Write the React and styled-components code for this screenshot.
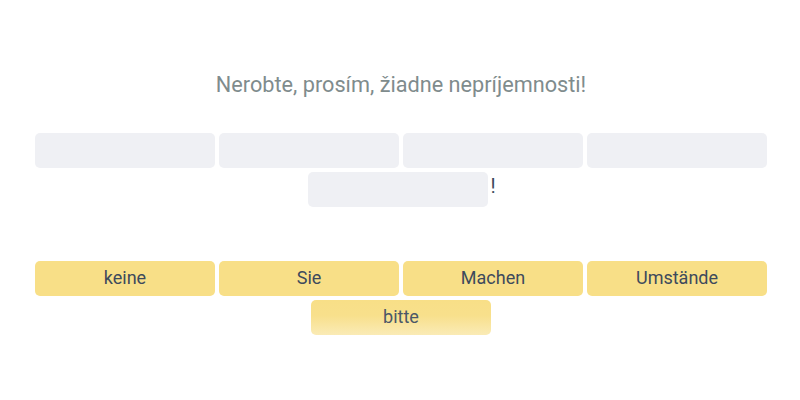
import React from "react";
import styled, { createGlobalStyle } from "styled-components";

const GlobalStyle = createGlobalStyle`
  body {
    margin: 0;
    background: #ffffff;
    font-family: Roboto, "Noto Sans", sans-serif;
  }
`;

const Page = styled.div`
  width: 800px;
  height: 400px;
  padding: 70px 33px 0 35px;
  box-sizing: border-box;
`;

const Title = styled.h2`
  margin: 0 0 33px 0;
  text-align: center;
  font-size: 21.7px;
  font-weight: 400;
  color: #7f8c8d;
  line-height: 30px;
`;

const Row = styled.div`
  display: flex;
  flex-wrap: wrap;
  justify-content: center;
  align-items: center;
  gap: 4px;
  margin-top: ${(p) => p.$mt || 0}px;
  margin-bottom: ${(p) => p.$mb || 0}px;
`;

const Slot = styled.div`
  width: 180px;
  height: 35px;
  border-radius: 5px;
  background: #eff0f4;
`;

const Punct = styled.span`
  font-size: 20px;
  color: #3d4a5c;
  margin-left: -2px;
  margin-right: -2px;
  line-height: 28px;
  align-self: flex-start;
`;

const Word = styled.button`
  width: 180px;
  height: 35px;
  border: none;
  border-radius: 5px;
  padding: 0 0 2px 0;
  background: ${(p) =>
    p.$fading ? "linear-gradient(#f8df87 0%, #f8e08c 45%, #faebb6 100%)" : "#f8df87"};
  color: ${(p) => (p.$fading ? "#4b5768" : "#3d4a5c")};
  font-family: Roboto, "Noto Sans", sans-serif;
  font-size: 18px;
  cursor: pointer;
`;

const slots = [0, 1, 2, 3];
const words = ["keine", "Sie", "Machen", "Umstände"];

export default function App() {
  return (
    <>
      <GlobalStyle />
      <Page>
        <Title>Nerobte, prosím, žiadne nepríjemnosti!</Title>
        <Row>
          {slots.map((i) => (
            <Slot key={i} />
          ))}
        </Row>
        <Row $mt={4} $mb={54}>
          <Slot />
          <Punct>!</Punct>
        </Row>
        <Row>
          {words.map((w) => (
            <Word key={w}>{w}</Word>
          ))}
        </Row>
        <Row $mt={4}>
          <Word $fading>bitte</Word>
        </Row>
      </Page>
    </>
  );
}
